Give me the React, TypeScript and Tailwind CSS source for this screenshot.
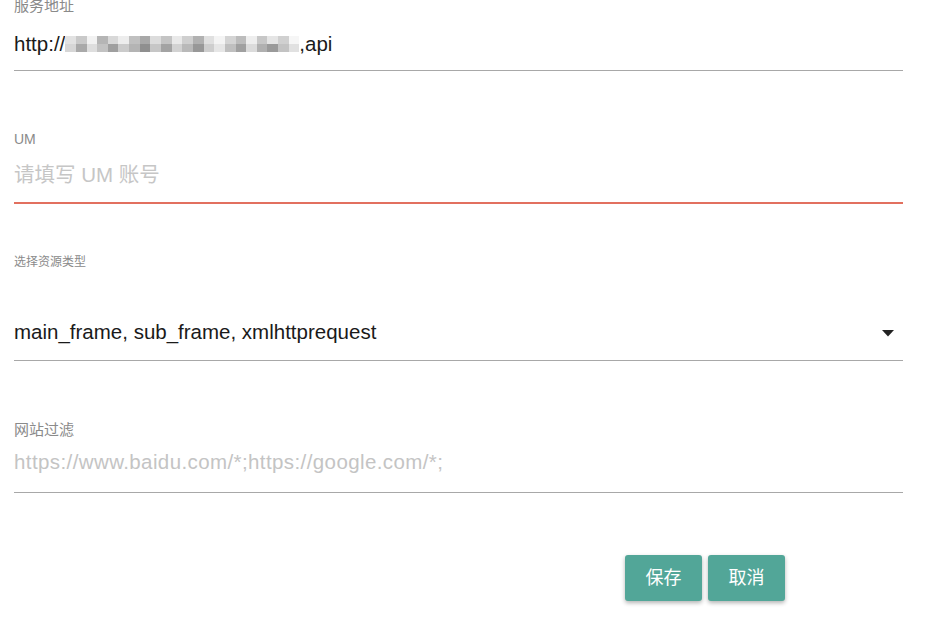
import React from "react";

const FONT = { fontFamily: '"Liberation Sans", "Noto Sans CJK SC", sans-serif' };

// pixelated chunk standing in for the masked host name
const TOP = ["#e2e2e2", "#c9c9c9", "#f2f2f2", "#b5b5b5", "#d8d8d8", "#ededed", "#c0c0c0", "#a8a8a8", "#dcdcdc", "#c4c4c4", "#e9e9e9", "#cfcfcf", "#b1b1b1", "#e0e0e0", "#f4f4f4", "#d4d4d4", "#bcbcbc", "#eeeeee", "#c7c7c7", "#e5e5e5", "#d0d0d0", "#f6f6f6"];
const BOTTOM = ["#d6d6d6", "#a9a9a9", "#dedede", "#c2c2c2", "#9f9f9f", "#cbcbcb", "#b4b4b4", "#8f8f8f", "#c6c6c6", "#a3a3a3", "#d2d2d2", "#b9b9b9", "#989898", "#cecece", "#e6e6e6", "#bfbfbf", "#a0a0a0", "#dbdbdb", "#b0b0b0", "#9a9a9a", "#c3c3c3", "#e1e1e1"];

function Label({ children, className = "" }: { children: React.ReactNode; className?: string }) {
  return <div className={`text-[#8a8a8a] ${className}`}>{children}</div>;
}

export default function App() {
  return (
    <div className="h-[630px] w-[939px] overflow-hidden bg-white" style={FONT}>
      <div className="ml-[14px] w-[889px]">
        {/* 服务地址 */}
        <Label className="-mt-[3px] text-[15px] leading-[18px]">服务地址</Label>
        <div className="mt-[17px] flex h-[24px] items-center text-[20.5px] leading-[24px] text-[#1a1a1a]">
          <span>http://</span>
          <span className="flex h-[16px] w-[234px] flex-col">
            <span className="flex h-[8px]">
              {TOP.map((c, i) => (
                <span key={i} className="h-full flex-1" style={{ backgroundColor: c }} />
              ))}
            </span>
            <span className="flex h-[8px]">
              {BOTTOM.map((c, i) => (
                <span key={i} className="h-full flex-1" style={{ backgroundColor: c }} />
              ))}
            </span>
          </span>
          <span>,api</span>
        </div>
        <div className="mt-[14px] h-px bg-[#a8a8a8]" />

        {/* UM */}
        <Label className="mt-[59px] text-[14px] leading-[18px]">UM</Label>
        <div className="mt-[15px] text-[20.5px] leading-[24px] text-[#c6c6c6]">请填写 UM 账号</div>
        <div className="mt-[15px] h-[2px] bg-[#e2705f]" />

        {/* 选择资源类型 */}
        <Label className="mt-[50px] text-[12px] leading-[16px]">选择资源类型</Label>
        <div className="mt-[50px] flex h-[24px] items-center justify-between text-[20.5px] leading-[24px] text-[#1a1a1a]">
          <span>main_frame, sub_frame, xmlhttprequest</span>
          <svg width="12" height="7" viewBox="0 0 12 7" className="mr-[9px] mt-[2px]">
            <path d="M0 0h12L6 6.5z" fill="#222" />
          </svg>
        </div>
        <div className="mt-[16px] h-px bg-[#a8a8a8]" />

        {/* 网站过滤 */}
        <Label className="mt-[60px] text-[15px] leading-[18px]">网站过滤</Label>
        <div className="mt-[11px] text-[20.5px] leading-[24px] tracking-[0.4px] text-[#c4c4c4]">https://www.baidu.com/*;https://google.com/*;</div>
        <div className="mt-[18px] h-px bg-[#a8a8a8]" />

        <div className="mt-[62px] flex justify-end gap-[6px] pr-[118px]">
          <button className="h-[46px] w-[77px] rounded-[3px] bg-[#52a698] text-[18px] text-white shadow-[0_2px_4px_rgba(0,0,0,0.3)]">
            保存
          </button>
          <button className="h-[46px] w-[77px] rounded-[3px] bg-[#52a698] text-[18px] text-white shadow-[0_2px_4px_rgba(0,0,0,0.3)]">
            取消
          </button>
        </div>
      </div>
    </div>
  );
}
